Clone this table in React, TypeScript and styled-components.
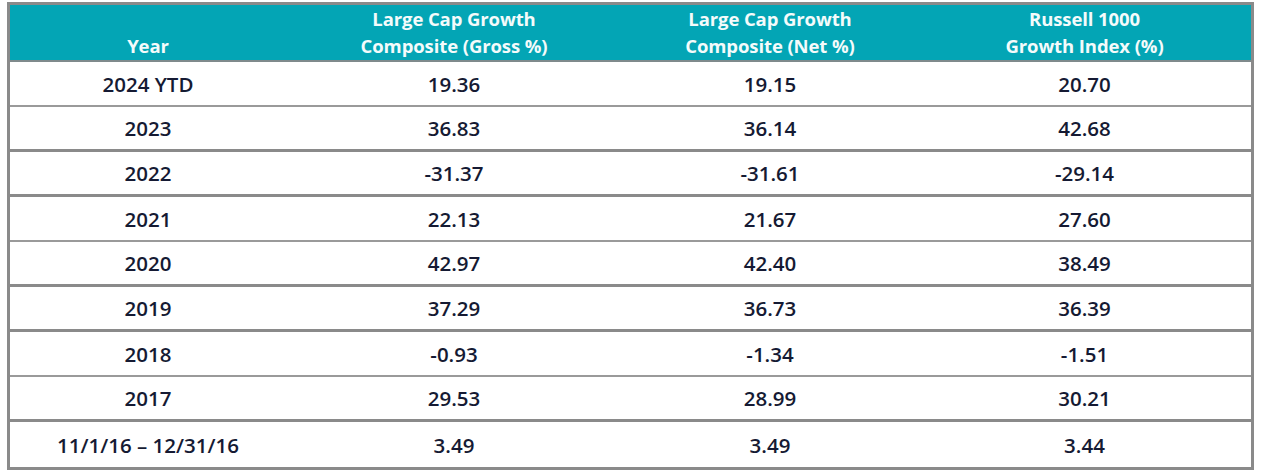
import React from "react";
import styled, { createGlobalStyle } from "styled-components";

const GlobalStyle = createGlobalStyle`
  html, body {
    margin: 0;
    padding: 0;
    background: #ffffff;
  }
  body {
    font-family: "Open Sans", "Noto Sans", "Liberation Sans", sans-serif;
  }
`;

const Page = styled.div`
  width: 1262px;
  height: 470px;
  padding: 2px 0 0 7px;
  box-sizing: border-box;
  background: #ffffff;
`;

const Table = styled.div`
  width: 1247px;
  box-sizing: border-box;
  border: 3px solid #8a8a8a;
  display: flex;
  flex-direction: column;
`;

const COLS = "276px 336px 296px 1fr";

const HeaderRow = styled.div`
  display: grid;
  grid-template-columns: ${COLS};
  height: 57px;
  box-sizing: border-box;
  background: #03a5b5;
  border-bottom: 2px solid #7f8a8c;
  align-items: end;
  padding-bottom: 2px;
`;

const HeaderCell = styled.div`
  color: #f4fbfb;
  font-weight: 700;
  font-size: 18.5px;
  line-height: 27px;
  text-align: center;
  letter-spacing: -0.1px;
`;

const Row = styled.div<{ $line: "thin" | "thick" | "none" }>`
  display: grid;
  grid-template-columns: ${COLS};
  height: 45px;
  box-sizing: border-box;
  align-items: center;
  border-bottom: ${(p) =>
    p.$line === "none"
      ? "none"
      : p.$line === "thick"
      ? "3px solid #8a8a8a"
      : "2px solid #9a9a9a"};
  padding-top: ${(p) => (p.$line === "thick" ? "0" : "1px")};
`;

const Cell = styled.div`
  color: #151a33;
  font-weight: 600;
  font-size: 20.5px;
  line-height: 24px;
  text-align: center;
  letter-spacing: 0;
`;

type DataRow = [string, string, string, string];

const rows: DataRow[] = [
  ["2024 YTD", "19.36", "19.15", "20.70"],
  ["2023", "36.83", "36.14", "42.68"],
  ["2022", "-31.37", "-31.61", "-29.14"],
  ["2021", "22.13", "21.67", "27.60"],
  ["2020", "42.97", "42.40", "38.49"],
  ["2019", "37.29", "36.73", "36.39"],
  ["2018", "-0.93", "-1.34", "-1.51"],
  ["2017", "29.53", "28.99", "30.21"],
  ["11/1/16 – 12/31/16", "3.49", "3.49", "3.44"],
];

const lines: Array<"thin" | "thick" | "none"> = [
  "thin",
  "thick",
  "thick",
  "thin",
  "thick",
  "thick",
  "thin",
  "thick",
  "none",
];

export default function App() {
  return (
    <>
      <GlobalStyle />
      <Page>
        <Table>
          <HeaderRow>
            <HeaderCell>Year</HeaderCell>
            <HeaderCell>
              Large Cap Growth
              <br />
              Composite (Gross %)
            </HeaderCell>
            <HeaderCell>
              Large Cap Growth
              <br />
              Composite (Net %)
            </HeaderCell>
            <HeaderCell>
              Russell 1000
              <br />
              Growth Index (%)
            </HeaderCell>
          </HeaderRow>
          {rows.map((r, i) => (
            <Row key={r[0]} $line={lines[i]}>
              {r.map((v, j) => (
                <Cell key={j}>{v}</Cell>
              ))}
            </Row>
          ))}
        </Table>
      </Page>
    </>
  );
}
